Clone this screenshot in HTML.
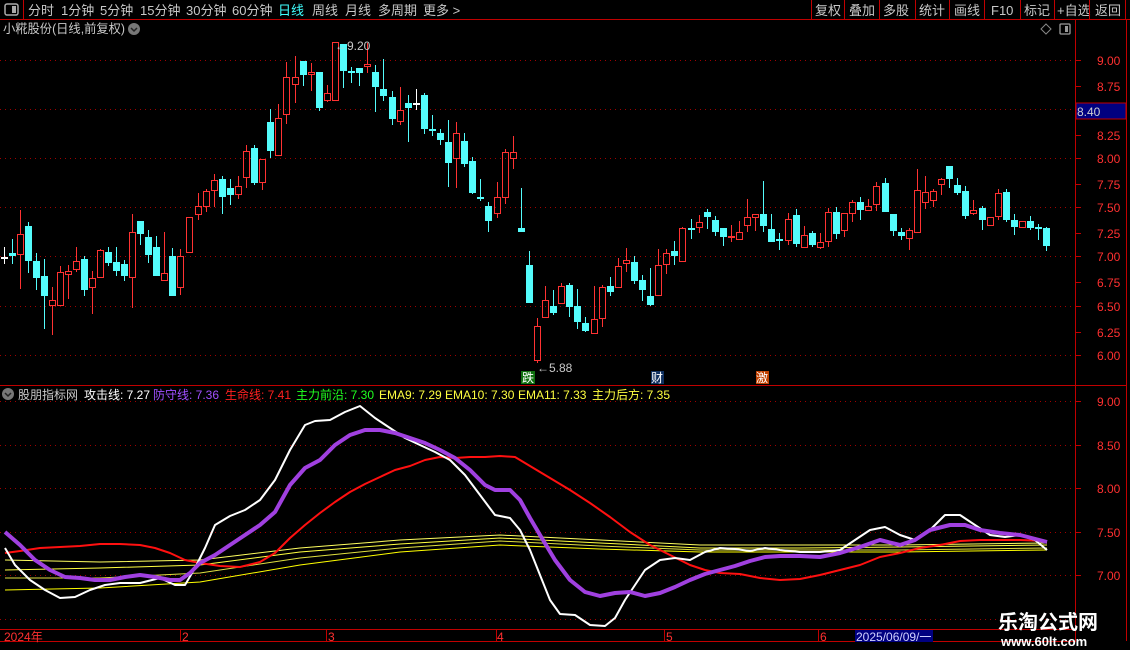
<!DOCTYPE html>
<html><head><meta charset="utf-8">
<style>
html,body{margin:0;padding:0;background:#000;width:1130px;height:650px;overflow:hidden}
svg{display:block}
text{font-family:"Liberation Sans","Noto Sans CJK SC",sans-serif}
</style></head><body>
<svg id="s" width="1130" height="650" xmlns="http://www.w3.org/2000/svg">
<rect width="1130" height="650" fill="#000"/>
<line x1="0" y1="19.5" x2="1130" y2="19.5" stroke="#c00000"/>
<line x1="23.5" y1="0" x2="23.5" y2="19" stroke="#c00000"/>
<rect x="5" y="4" width="13" height="11" rx="2" fill="none" stroke="#aaa" stroke-width="1.5"/>
<rect x="12" y="6" width="4" height="7" fill="#aaa"/>
<g font-size="13" fill="#c8c8c8">
<text x="28" y="15">分时</text><text x="61" y="15">1分钟</text><text x="100" y="15">5分钟</text><text x="140" y="15">15分钟</text><text x="186" y="15">30分钟</text><text x="232" y="15">60分钟</text><text x="278" y="15" fill="#40ffff">日线</text><text x="312" y="15">周线</text><text x="345" y="15">月线</text><text x="378" y="15">多周期</text><text x="423" y="15">更多 &gt;</text>
<text x="815" y="15">复权</text><text x="849" y="15">叠加</text><text x="883" y="15">多股</text><text x="919" y="15">统计</text><text x="954" y="15">画线</text><text x="991" y="15">F10</text><text x="1024" y="15">标记</text><text x="1057" y="15">+自选</text><text x="1095" y="15">返回</text>
</g>
<g stroke="#c00000"><line x1="811.5" y1="0" x2="811.5" y2="19"/><line x1="844.5" y1="0" x2="844.5" y2="19"/><line x1="879.5" y1="0" x2="879.5" y2="19"/><line x1="915.5" y1="0" x2="915.5" y2="19"/><line x1="949.5" y1="0" x2="949.5" y2="19"/><line x1="984.5" y1="0" x2="984.5" y2="19"/><line x1="1020.5" y1="0" x2="1020.5" y2="19"/><line x1="1054.5" y1="0" x2="1054.5" y2="19"/><line x1="1089.5" y1="0" x2="1089.5" y2="19"/><line x1="1125.5" y1="0" x2="1125.5" y2="19"/></g>
<line x1="1075.5" y1="20" x2="1075.5" y2="641" stroke="#c00000"/>
<line x1="1126.5" y1="20" x2="1126.5" y2="641" stroke="#c00000"/>
<line x1="0" y1="385.5" x2="1127" y2="385.5" stroke="#c00000"/>
<line x1="0" y1="629.5" x2="1076" y2="629.5" stroke="#c00000"/>
<line x1="0" y1="641.5" x2="1076" y2="641.5" stroke="#c00000"/>
<text x="3" y="33" font-size="12.5" fill="#c8c8c8" textLength="122" lengthAdjust="spacingAndGlyphs">小糀股份(日线,前复权)</text>
<circle cx="134" cy="29" r="6" fill="#777"/><path d="M131 28 L134 31 L137 28" stroke="#222" stroke-width="1.5" fill="none"/>
<path d="M1046 24 L1051 29 L1046 34 L1041 29 Z" fill="none" stroke="#888"/>
<rect x="1060" y="24" width="10" height="10" rx="1" fill="none" stroke="#999" stroke-width="1.3"/><rect x="1065" y="26" width="3" height="6" fill="#999"/>
<g id="grid"></g>
<g id="axis" font-size="12" fill="#ff3030"></g>
<rect x="1076" y="103" width="50" height="16" fill="#000080" stroke="#c00000"/>
<text x="1077" y="116" font-size="12" fill="#d0d0d0">8.40</text>
<g id="candles"></g>
<text x="335" y="50" font-size="12" fill="#c8c8c8">←9.20</text>
<text x="537" y="372" font-size="12" fill="#c8c8c8">←5.88</text>
<rect x="521" y="371" width="14" height="13" fill="#107010"/><text x="522" y="382" font-size="12" fill="#fff">跌</text>
<rect x="651" y="371" width="13" height="13" fill="#103060"/><text x="651" y="382" font-size="12" fill="#fff">财</text>
<rect x="756" y="371" width="13" height="13" fill="#c04000"/><text x="756" y="382" font-size="12" fill="#fff">激</text>
<circle cx="8" cy="394" r="6" fill="#777"/><path d="M5 393 L8 396 L11 393" stroke="#222" stroke-width="1.5" fill="none"/>
<g font-size="12">
<text x="18" y="399" fill="#c8c8c8">股朋指标网</text>
<text x="84" y="399" fill="#fff">攻击线: 7.27</text>
<text x="153" y="399" fill="#a050ff">防守线: 7.36</text>
<text x="225" y="399" fill="#ff2020">生命线: 7.41</text>
<text x="296" y="399" fill="#20ff20">主力前沿: 7.30</text>
<text x="379" y="399" fill="#ffff40">EMA9: 7.29</text>
<text x="445" y="399" fill="#ffff40">EMA10: 7.30</text>
<text x="518" y="399" fill="#ffff40">EMA11: 7.33</text>
<text x="592" y="399" fill="#ffff40">主力后方: 7.35</text>
</g>
<g id="ind" fill="none"></g>
<g font-size="12" fill="#ff3030">
<text x="4" y="641">2024年</text><text x="182" y="641">2</text><text x="328" y="641">3</text><text x="497" y="641">4</text><text x="666" y="641">5</text><text x="820" y="641">6</text>
</g>
<g stroke="#c00000"><line x1="180.5" y1="630" x2="180.5" y2="641"/><line x1="326.5" y1="630" x2="326.5" y2="641"/><line x1="496.5" y1="630" x2="496.5" y2="641"/><line x1="664.5" y1="630" x2="664.5" y2="641"/><line x1="818.5" y1="630" x2="818.5" y2="641"/></g>
<rect x="855" y="630" width="78" height="12" fill="#000080"/>
<text x="856" y="641" font-size="12" fill="#d0d0ff">2025/06/09/一</text>
<text x="998" y="629" font-size="20" font-weight="bold" fill="#fff">乐淘公式网</text>
<text x="1001" y="646" font-size="13" font-family="Liberation Serif" font-weight="bold" fill="#fff">www.60lt.com</text>
</svg>
<script>
var NS="http://www.w3.org/2000/svg";
function el(p,t,a){var e=document.createElementNS(NS,t);for(var k in a)e.setAttribute(k,a[k]);document.getElementById(p).appendChild(e);return e;}
[60,109,158,207,256,306,355].forEach(function(y){el("grid","line",{x1:0,y1:y+.5,x2:1075,y2:y+.5,stroke:"#a00000","stroke-dasharray":"1 4"});});
[401,445,488,532,575,619].forEach(function(y){el("grid","line",{x1:0,y1:y+.5,x2:1075,y2:y+.5,stroke:"#a00000","stroke-dasharray":"1 4"});});
var labs=[["9.00",60],["8.75",86],["8.25",135],["8.00",158],["7.75",184],["7.50",207],["7.25",233],["7.00",256],["6.75",282],["6.50",306],["6.25",332],["6.00",355],["9.00",401],["8.50",445],["8.00",488],["7.50",532],["7.00",575]];
labs.forEach(function(l){var t=el("axis","text",{x:1097,y:l[1]+5});t.textContent=l[0];el("grid","line",{x1:1076,y1:l[1]+.5,x2:1081,y2:l[1]+.5,stroke:"#c00000"});});
var C=[[4,'w',257,257,247,264],[12,'c',253,256,239,264],[20,'r',234,254,210,289],[28,'c',226,261,222,273],[36,'c',261,278,253,290],[44,'c',276,296,259,329],[52,'r',300,305,287,335],[60,'r',272,305,266,305],[68,'r',271,274,265,299],[76,'r',261,269,247,272],[84,'c',259,290,256,296],[92,'r',278,287,271,314],[100,'r',250,277,249,278],[108,'c',252,263,247,266],[116,'c',262,271,247,276],[124,'c',264,276,260,281],[132,'r',232,277,214,308],[140,'c',221,234,221,245],[148,'c',237,255,230,263],[156,'c',247,276,236,276],[164,'r',273,280,232,281],[172,'c',256,296,248,296],[180,'r',256,287,249,295],[189,'r',217,252,217,252],[198,'r',206,214,193,220],[206,'r',191,206,189,212],[214,'r',180,190,174,207],[222,'c',179,197,176,214],[230,'c',188,195,179,205],[238,'r',186,194,176,199],[246,'r',151,177,145,188],[254,'c',148,183,145,185],[262,'r',159,182,159,190],[270,'c',122,151,109,158],[278,'r',118,155,104,155],[286,'r',77,114,62,124],[295,'r',77,84,56,103],[303,'c',61,75,61,86],[311,'r',72,74,63,91],[319,'c',72,108,72,111],[327,'r',93,100,85,102],[335,'r',42,100,42,100],[343,'c',44,71,44,88],[351,'c',71,73,67,83],[359,'c',68,73,68,86],[367,'r',64,66,43,73],[375,'c',72,87,65,112],[383,'c',89,96,59,101],[392,'c',97,119,91,125],[400,'r',110,121,87,125],[408,'c',103,108,95,142],[416,'w',103,103,89,110],[424,'c',95,129,93,134],[432,'c',129,131,115,136],[440,'c',133,140,129,145],[448,'c',142,163,120,187],[456,'r',133,158,122,188],[464,'c',141,164,133,167],[472,'c',161,193,157,194],[480,'c',197,198,179,201],[488,'c',206,221,202,232],[497,'r',197,213,182,218],[505,'r',152,197,149,204],[513,'r',152,158,136,169],[521,'c',228,232,188,232],[529,'c',265,303,251,303],[537,'r',326,360,318,363],[545,'r',300,317,286,317],[553,'c',306,313,290,315],[561,'r',286,303,283,303],[569,'c',285,307,283,317],[577,'c',306,322,289,329],[585,'c',323,331,317,332],[594,'r',319,333,286,333],[602,'r',287,318,285,327],[610,'c',286,292,277,296],[618,'r',266,287,258,287],[626,'r',260,263,248,272],[634,'c',262,281,256,284],[642,'c',280,290,275,301],[650,'c',296,305,268,306],[658,'r',265,295,249,295],[666,'r',253,264,249,274],[674,'c',251,256,241,265],[682,'r',228,261,227,261],[691,'c',228,230,219,239],[699,'r',222,227,215,233],[707,'c',212,217,209,229],[715,'c',220,232,216,236],[723,'c',228,237,228,246],[731,'r',236,237,225,242],[739,'r',232,239,221,240],[747,'r',217,225,199,232],[755,'r',214,217,214,231],[763,'c',214,226,181,232],[771,'c',229,242,214,242],[779,'c',239,241,233,250],[788,'r',219,240,213,245],[796,'c',215,244,209,247],[804,'r',235,247,226,247],[812,'c',233,245,231,247],[820,'r',242,247,233,249],[828,'r',212,241,208,247],[836,'c',212,234,207,239],[844,'r',213,230,213,237],[852,'r',202,213,200,222],[860,'c',202,210,197,220],[868,'r',206,210,199,211],[876,'r',186,204,182,211],[885,'c',183,212,178,212],[893,'c',214,231,214,236],[901,'c',232,236,228,240],[909,'r',230,238,228,250],[917,'r',190,232,169,232],[925,'r',192,202,176,209],[933,'r',191,200,189,207],[941,'r',179,184,178,195],[949,'c',166,179,166,188],[957,'c',185,193,178,195],[965,'c',191,216,186,219],[973,'r',210,213,200,215],[982,'c',208,220,206,230],[990,'r',217,225,217,225],[998,'r',193,216,189,220],[1006,'c',192,220,189,222],[1014,'c',220,227,214,235],[1022,'r',221,227,221,227],[1030,'c',221,228,216,230],[1038,'c',227,229,224,240],[1046,'c',228,246,227,251]];
C.forEach(function(c){var x=c[0],t=c[1],bt=c[2],bb=c[3],hi=c[4],lo=c[5];
 var col=t=='r'?"#ff3232":(t=='c'?"#54fcfc":"#ffffff");
 if(t=='r'){
  if(hi<bt)el("candles","line",{x1:x+.5,y1:hi,x2:x+.5,y2:bt,stroke:col});
  if(lo>bb)el("candles","line",{x1:x+.5,y1:bb,x2:x+.5,y2:lo,stroke:col});
  el("candles","rect",{x:x-2.5,y:bt+.5,width:6,height:Math.max(bb-bt,1),fill:"none",stroke:col});
 }else{
  el("candles","line",{x1:x+.5,y1:hi,x2:x+.5,y2:lo,stroke:col});
  if(bb-bt<=2)el("candles","rect",{x:x-3,y:bt,width:7,height:2,fill:col});
  else el("candles","rect",{x:x-3,y:bt,width:7,height:bb-bt,fill:col});
 }
});
function pl(pts,col,w){el("ind","polyline",{points:pts,stroke:col,"stroke-width":w,"stroke-linejoin":"round"});}
pl("5,560 100,562 200,560 300,548 400,540 500,535 600,540 700,545 800,545 900,545 1047,543","#ffff60",1);
pl("5,570 100,568 200,565 300,552 400,544 500,538 600,543 700,548 800,548 900,547 1047,545","#ffff40",1);
pl("5,578 100,578 200,573 300,558 400,548 500,541 600,546 700,550 800,550 900,550 1047,548","#e0e040",1);
pl("5,590 100,588 200,582 300,565 400,552 500,545 600,549 700,552 800,552 900,552 1047,550","#ffff00",1);
pl("5,553 20,551 40,548 60,547 80,546 100,544 120,544 140,545 155,548 170,553 185,560 200,563 220,566 240,567 260,562 275,553 290,538 305,525 320,513 335,502 350,492 365,484 380,477 395,470 410,466 425,460 440,457 455,458 470,457 485,457 500,456 515,457 530,466 550,478 570,490 590,503 610,517 630,532 650,545 670,555 690,565 705,570 720,573 740,574 760,578 780,580 800,579 820,575 840,570 860,565 880,557 900,553 920,548 940,545 960,541 980,540 1000,540 1020,540 1047,541","#ff1010",2);
pl("5,548 15,565 30,580 45,590 60,598 75,597 90,590 105,585 120,583 140,583 160,578 175,585 185,585 195,568 205,548 215,525 230,516 245,510 260,500 275,480 290,450 305,425 315,421 330,420 345,412 360,406 375,418 390,428 405,438 420,445 435,452 450,460 465,475 480,495 495,515 510,518 520,530 530,550 540,575 550,600 560,614 575,615 590,625 605,626 615,618 625,600 635,585 645,570 660,560 675,558 690,560 705,552 720,548 735,549 750,551 765,548 780,550 800,552 820,552 840,550 855,540 870,530 885,527 900,535 915,540 930,530 945,515 960,515 975,525 990,535 1005,537 1020,535 1035,540 1047,550","#ffffff",2);
pl("5,532 20,545 35,560 50,570 65,577 80,578 95,580 110,580 125,577 140,575 155,577 170,580 180,580 190,573 200,563 215,555 230,545 245,535 260,525 275,512 290,485 305,468 320,460 335,445 350,435 365,430 380,430 395,433 410,438 425,443 440,450 455,458 470,470 485,485 495,490 510,490 520,500 530,518 540,535 555,560 570,580 585,592 600,596 615,593 630,592 645,596 660,593 675,587 690,580 705,574 720,570 735,566 750,561 765,557 780,556 800,556 820,557 840,553 860,547 880,540 900,545 915,540 930,530 950,525 965,525 980,530 1000,533 1020,535 1047,542","#a040e0",4);
</script>
</body></html>
